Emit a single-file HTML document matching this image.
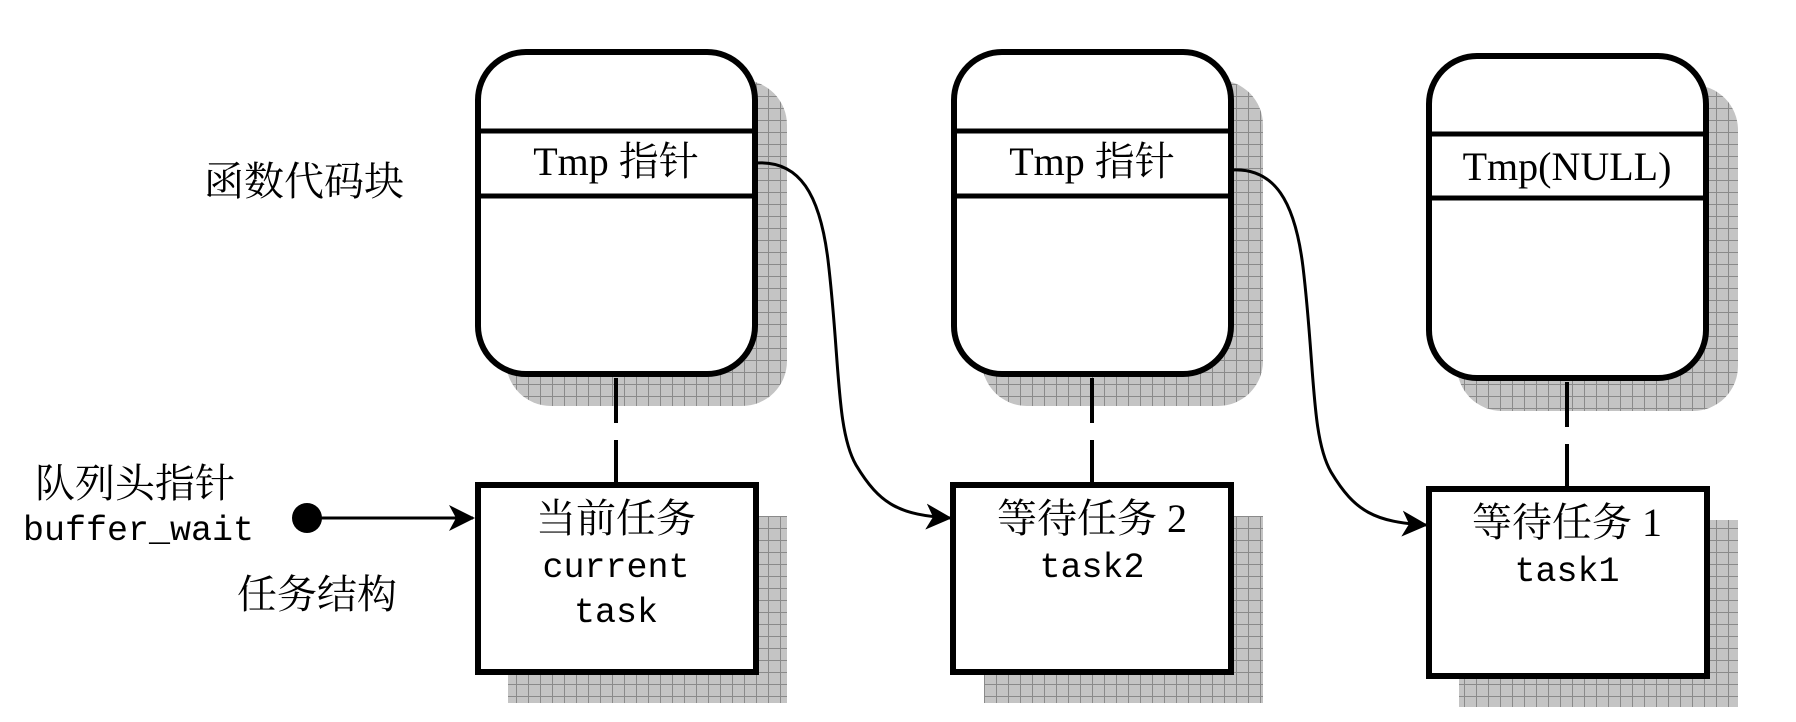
<!DOCTYPE html>
<html><head><meta charset="utf-8"><style>
html,body{margin:0;padding:0;background:#fff;width:1796px;height:722px;overflow:hidden}
svg{display:block}
.cj{font-family:"Liberation Serif","Noto Serif CJK SC",serif;font-size:40px;fill:#000}
.mo{font-family:"Liberation Mono","Noto Serif CJK SC",monospace;font-size:35px;fill:#000}
</style></head><body>
<svg width="1796" height="722" viewBox="0 0 1796 722" xmlns="http://www.w3.org/2000/svg">
<defs>
<pattern id="g" width="12" height="12" patternUnits="userSpaceOnUse">
<rect width="12" height="12" fill="#c4c4c4"/>
<path d="M0 0.5H12M0.5 0V12" stroke="#8a8a8a" stroke-width="1"/>
</pattern>
<marker id="ah" markerWidth="26" markerHeight="26" refX="24" refY="13" orient="auto" markerUnits="userSpaceOnUse">
<path d="M0 0 L26 13 L0 26 L7 13 Z" fill="#000"/>
</marker>
</defs>
<g fill="url(#g)">
<rect x="506" y="80" width="281" height="326" rx="45"/>
<rect x="982" y="80" width="281" height="326" rx="45"/>
<rect x="1457" y="85" width="281" height="326" rx="45"/>
<rect x="508" y="516" width="279" height="187"/>
<rect x="984" y="516" width="279" height="187"/>
<rect x="1459" y="520" width="279" height="187"/>
</g>
<g fill="#fff" stroke="#000" stroke-width="6">
<rect x="478" y="52" width="277" height="322" rx="48"/>
<rect x="954" y="52" width="277" height="322" rx="48"/>
<rect x="1429" y="56" width="277" height="322" rx="48"/>
</g>
<g stroke="#000" stroke-width="5">
<path d="M478 131H755M478 196H755M954 131H1231M954 196H1231M1429 134H1706M1429 198H1706"/>
</g>
<g fill="#fff" stroke="#000" stroke-width="6">
<rect x="478" y="485" width="278" height="187"/>
<rect x="953" y="485" width="278" height="187"/>
<rect x="1429" y="489" width="278" height="187"/>
</g>
<g stroke="#000" stroke-width="4">
<path d="M616 378V423M616 440V484M1092 378V423M1092 440V484M1567 382V427M1567 444V488"/>
</g>
<circle cx="307" cy="518" r="15" fill="#000"/>
<path d="M307 518H473" stroke="#000" stroke-width="3" marker-end="url(#ah)"/>
<g fill="none" stroke="#000" stroke-width="3" marker-end="url(#ah)">
<path d="M756 163 C800 160 820 195 828 260 C840 360 836 430 856 465 C880 505 900 515 950 518"/>
<path d="M1231 170 C1275 167 1295 202 1303 267 C1315 367 1311 437 1331 472 C1355 512 1375 522 1426 525"/>
</g>
<text class="cj" x="204" y="195">函数代码块</text>
<text class="cj" x="35" y="497">队列头指针</text>
<text class="mo" x="23" y="540">buffer_wait</text>
<text class="cj" x="237" y="608">任务结构</text>
<g text-anchor="middle">
<text class="cj" x="616" y="175">Tmp 指针</text>
<text class="cj" x="1092" y="175">Tmp 指针</text>
<text class="cj" x="1567" y="180">Tmp(NULL)</text>
<text class="cj" x="616" y="532">当前任务</text>
<text class="mo" x="616" y="577">current</text>
<text class="mo" x="616" y="622">task</text>
<text class="cj" x="1092" y="532">等待任务 2</text>
<text class="mo" x="1092" y="577">task2</text>
<text class="cj" x="1567" y="536">等待任务 1</text>
<text class="mo" x="1567" y="581">task1</text>
</g>
</svg>
</body></html>
